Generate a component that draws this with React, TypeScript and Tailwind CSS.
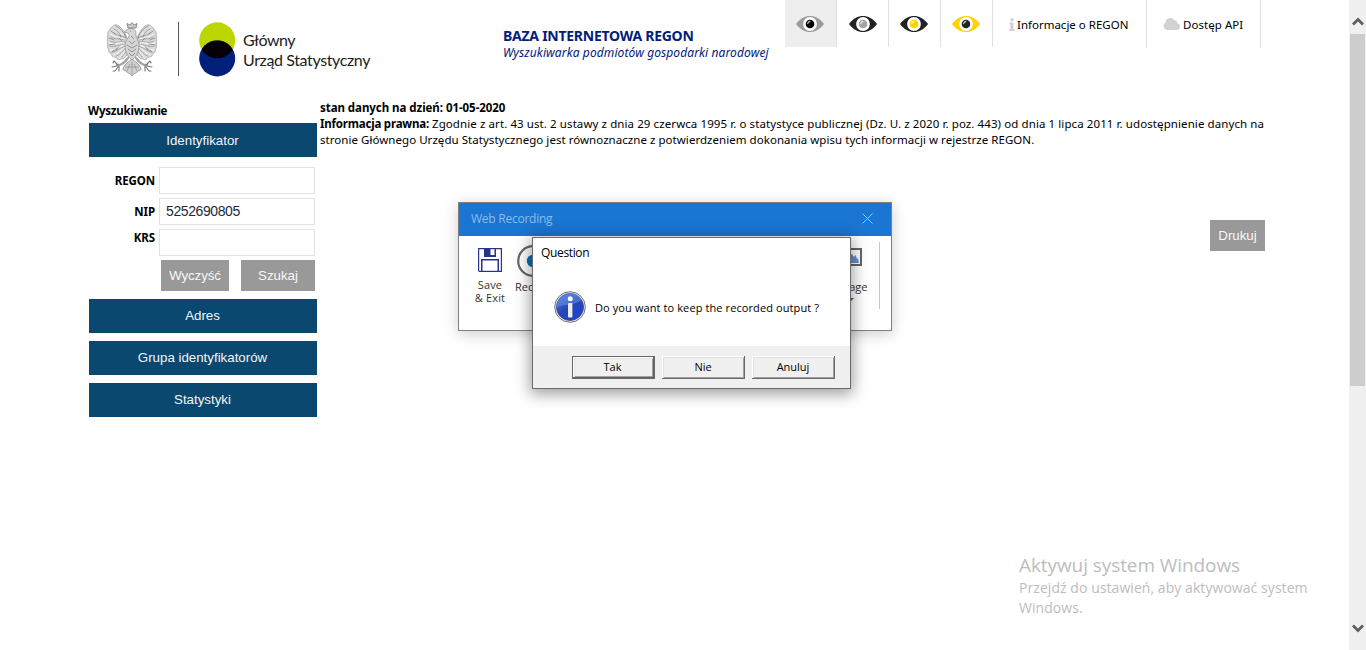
import React from "react";

const lato = "font-[Lato,'Noto_Sans',sans-serif]";
const noto = "font-['Noto_Sans','Open_Sans',sans-serif]";
const open = "font-['Open_Sans','Noto_Sans',sans-serif]";
const arial = "font-['Liberation_Sans',Arial,sans-serif]";

function WingHalf() {
  return (
    <g fill="none" stroke="#8c8c8c" strokeWidth="0.7" strokeLinecap="round">
      <path
        fill="#dadada"
        stroke="#a0a0a0"
        d="M21 19 C19 12 15 5 10 3 C7 2 6 4 5 5 C3 5 3 8 2 9 C0 10 1 13 0.5 15 C-0.5 18 1 20 0.5 23 C0 26 2 27 2 30 C3 32 5 31 5 34 C7 36 9 34 10 37 C13 39 14 36 16 37 L21 32 Z"
      />
      <path d="M19 16 C14 13 9 14 7 11 M18 18 C12 16 8 18 4 15 M18 20 C12 19 7 22 3 19 M18 22 C13 22 8 26 3 24 M19 24 C14 25 9 30 5 30 M19 26 C16 28 12 34 9 34 M20 28 C18 31 16 35 14 35" />
      <path stroke="#fafafa" strokeWidth="0.9" d="M16 12 C12 12 10 9 8 7 M17 17 C12 15 9 16 4 12 M17 21 C12 20 8 23 2 21 M17 23 C13 24 9 28 3 28 M18 25 C14 28 11 32 7 33 M19 28 C16 32 14 33 12 37" />
      <path stroke="#6a6a6a" strokeWidth="0.6" d="M9 4 C13 6 17 10 19 16 M7 7 C10 8 13 11 14 15 M4 9 L8 12 M2 16 L7 18 M2 23 L8 22 M5 30 L10 26 M12 16 L15 19 M12 25 L9 28" />
      <path stroke="#a2a2a2" strokeWidth="2.2" d="M21 36 C18 40 14 44 10 43" />
      <path stroke="#7a7a7a" strokeWidth="1.1" d="M11 43 L7 39 M10 44 L5 45 M11 45 L8 49 M12 44 L12 49 M7 39 L6 41 M8 49 L6 49" />
    </g>
  );
}

function Eagle() {
  return (
    <svg width="50" height="55" viewBox="0 0 50 55" className="shrink-0">
      <WingHalf />
      <g transform="translate(50 0) scale(-1 1)">
        <WingHalf />
      </g>
      <path fill="#d6d6d6" stroke="#8a8a8a" strokeWidth="0.7" d="M21 11 L17 10 L21 7 C24 5 29 7 29 11 C28 15 32 18 32 23 C32 30 29 35 25 38 C21 35 18 30 18 23 C18 18 23 16 22 12 Z" />
      <path fill="none" stroke="#707070" strokeWidth="0.7" d="M24 14 L27 17 M22 19 L25 22 L28 19 M20 23 L25 26 L30 23 M21 27 L25 30 L29 27 M22 31 L25 34 L28 31 M23 9 L24 9" />
      <path fill="#c9c9c9" stroke="#777" strokeWidth="0.8" d="M21 6 L20 1.5 L23 3 L25 0.5 L27 3 L30 1.5 L29 6 Z" />
      <path fill="#d0d0d0" stroke="#8c8c8c" strokeWidth="0.8" d="M25 37 C20 41 17 43 16 47 C17 50 19 48 20 50 C22 52 23 51 25 54 C27 51 28 52 30 50 C31 48 33 50 34 47 C33 43 30 41 25 37 Z" />
      <path fill="none" stroke="#858585" strokeWidth="0.6" d="M25 40 V52 M23 42 L20 49 M27 42 L30 49 M18 45 H32" />
    </svg>
  );
}

function Eye({ outer, iris }: { outer: string; iris: string }) {
  return (
    <svg width="28" height="16" viewBox="0 0 28 16">
      <path fill={outer} d="M0 8 C4 2.4 9 0 14 0 S24 2.4 28 8 C24 13.6 19 16 14 16 S4 13.6 0 8Z" />
      <circle cx="14" cy="8" r="6.9" fill="#fff" />
      <circle cx="14" cy="8" r="4.3" fill={iris} />
      <path d="M11.7 7.6 A2.6 2.6 0 0 1 13.8 5.5" stroke="#fff" strokeWidth="1.3" fill="none" strokeLinecap="round" opacity="0.7" />
    </svg>
  );
}

function Logo() {
  return (
    <div className="flex h-[60px] items-start">
      <Eagle />
      <div className="ml-[21px] h-[54px] w-px bg-[#555]" />
      <svg width="37" height="55" viewBox="0 0 37 55" className="ml-[20px]">
        <defs>
          <clipPath id="lens">
            <circle cx="18.2" cy="18.3" r="18" />
          </clipPath>
        </defs>
        <circle cx="18.2" cy="18.3" r="18" fill="#bdd600" />
        <circle cx="18.2" cy="36.4" r="18" fill="#00207c" />
        <circle cx="18.2" cy="36.4" r="18" fill="#050006" clipPath="url(#lens)" />
      </svg>
      <div className={`${lato} ml-[7px] mt-[8px] whitespace-nowrap text-[16px] leading-[20px] text-[#1c1c1c]`}>
        <div className="tracking-[-0.5px]">Główny</div>
        <div className="tracking-[-0.38px]">Urząd Statystyczny</div>
      </div>
    </div>
  );
}

function Header() {
  const eyes = [
    { outer: "#9c9c9c", iris: "#000", pad: "pl-[11px]" },
    { outer: "#222", iris: "#a5a5a5", pad: "pl-[12px]" },
    { outer: "#222", iris: "#ffd200", pad: "pl-[11px]" },
    { outer: "#ffd200", iris: "#222", pad: "pl-[11px]" },
  ];
  return (
    <header className="flex h-[98px] items-start pl-[107px]">
      <div className="w-[396px] pt-[22px]">
        <Logo />
      </div>
      <div className={`${noto} w-[282px] whitespace-nowrap pt-[27px] text-[#00207c]`}>
        <div className="text-[14px] font-bold leading-[18px] tracking-[-0.26px]">BAZA INTERNETOWA REGON</div>
        <div className="text-[12px] italic leading-[16px] tracking-[0.1px]">Wyszukiwarka podmiotów gospodarki narodowej</div>
      </div>
      <div className="flex">
        {eyes.map((e, i) => (
          <div key={i} className={`flex h-[47px] w-[52px] items-center border-r border-[#e0e0e0] ${e.pad} ${i === 0 ? "bg-[#eee]" : ""}`}>
            <Eye outer={e.outer} iris={e.iris} />
          </div>
        ))}
        <div className="flex h-[48px] w-[154px] items-center border-r border-[#e0e0e0] pl-4">
          <svg width="6" height="13" viewBox="0 0 6 13" fill="#d2d2d2">
            <circle cx="3" cy="1.8" r="1.8" />
            <path d="M0.5 4.5H4.5V11H5.6V13H0.3V11H1.4V6.4H0.5Z" />
          </svg>
          <span className={`${noto} ml-[2px] mt-[2px] whitespace-nowrap text-[11.5px] leading-[16px]`}>Informacje o REGON</span>
        </div>
        <div className="flex h-[48px] w-[114px] items-center border-r border-[#e0e0e0] pl-4">
          <svg width="18" height="12" viewBox="0 0 18 12" fill="#d2d2d2">
            <path d="M4 12A4 4 0 0 1 2.5 4.6A4.8 4.8 0 0 1 11.3 2.2A2.8 2.8 0 0 1 14.3 5.3A3.4 3.4 0 0 1 14 12Z" />
          </svg>
          <span className={`${noto} ml-[2px] mt-[2px] whitespace-nowrap text-[11.5px] leading-[16px] tracking-[0.05px]`}>Dostęp API</span>
        </div>
      </div>
    </header>
  );
}

const menuButton = `${arial} flex h-[34px] w-[228px] items-center justify-center bg-[#0b486f] pr-px text-[13.3px] text-[#f5f5f5]`;
const greyButton = `${arial} flex h-[31px] items-center justify-center bg-[#999] pt-px text-[13.3px] text-[#f8f8f8]`;

function Field({ label, value, lift }: { label: string; value?: string; lift?: boolean }) {
  return (
    <div className="flex h-[27px]">
      <div className={`${noto} flex w-[66px] justify-end text-[11.5px] font-bold leading-[16px] tracking-[-0.1px] ${lift ? "pt-[1px]" : "pt-[6px]"}`}>{label}</div>
      <div className={`${arial} ml-1 h-[27px] w-[156px] border border-[#e2e2e2] pl-[6px] text-[14px] leading-[25px] tracking-[-0.4px] text-[#1b2a3a]`}>{value}</div>
    </div>
  );
}

function Sidebar() {
  return (
    <aside className="w-[228px]">
      <div className={`${noto} -ml-px h-[25px] pt-[5px] text-[11.5px] font-bold leading-[16px] tracking-[-0.2px]`}>Wyszukiwanie</div>
      <div className={`${menuButton} pt-px`}>Identyfikator</div>
      <div className="mt-[10px] flex flex-col gap-1">
        <Field label="REGON" />
        <Field label="NIP" value="5252690805" />
        <Field label="KRS" lift />
      </div>
      <div className="mt-1 flex gap-3 pl-[72px]">
        <div className={`${greyButton} w-[68px] tracking-[-0.1px]`}>Wyczyść</div>
        <div className={`${greyButton} w-[74px]`}>Szukaj</div>
      </div>
      <div className="mt-2 flex flex-col gap-2">
        <div className={menuButton}>Adres</div>
        <div className={menuButton}>Grupa identyfikatorów</div>
        <div className={menuButton}>Statystyki</div>
      </div>
    </aside>
  );
}

function Content() {
  return (
    <main className="flex w-[945px] flex-col">
      <div className={`${noto} whitespace-nowrap pt-[2px] text-[11.5px] leading-[16px]`}>
        <div className="font-bold tracking-[-0.05px]">stan danych na dzień: 01-05-2020</div>
        <div>
          <b className="tracking-[-0.2px]">Informacja prawna:</b>{" "}
          <span className="tracking-[0.09px]">Zgodnie z art. 43 ust. 2 ustawy z dnia 29 czerwca 1995 r. o statystyce publicznej (Dz. U. z 2020 r. poz. 443) od dnia 1 lipca 2011 r. udostępnienie danych na</span>
        </div>
        <div className="tracking-[0.045px]">stronie Głównego Urzędu Statystycznego jest równoznaczne z potwierdzeniem dokonania wpisu tych informacji w rejestrze REGON.</div>
      </div>
      <div className={`${greyButton} mt-[72px] w-[55px] self-end`}>Drukuj</div>
    </main>
  );
}

function RecordingWindow() {
  return (
    <div className="absolute left-[458px] top-[202px] flex h-[129px] w-[434px] flex-col border border-[#808080] bg-white shadow-[0_3px_14px_rgba(0,0,0,0.2)]">
      <div className="flex h-[33px] items-center justify-between bg-[#1a75d3] pb-[2px] pl-3 pr-[18px]">
        <span className={`${open} text-[12px] tracking-[-0.25px] text-[#8bbcea]`}>Web Recording</span>
        <svg width="11" height="11" viewBox="0 0 11 11" stroke="#9bc5ef" strokeWidth="1">
          <path d="M0.5 0.5L10.5 10.5M10.5 0.5L0.5 10.5" />
        </svg>
      </div>
      <div className={`${open} flex flex-1 text-[11px] leading-[13px] text-[#333]`}>
        <div className="flex w-[62px] flex-col items-center pt-3">
          <svg width="24" height="24" viewBox="0 0 24 24">
            <path d="M0 0H24V24H1L0 23Z" fill="#27348b" />
            <path d="M1.2 1.2H6V9H18V1.2H22.8V22.8H21V11H3V22.8H1.2Z" fill="#fff" />
            <path d="M12.5 1.2H16.5V7H12.5Z" fill="#fff" />
            <path d="M4.5 12.5H19.5V22.8H4.5Z" fill="#fff" />
          </svg>
          <div className="mt-[6px] text-center tracking-[0.15px]">Save<br />&amp; Exit</div>
        </div>
        <div className="w-[40px] pt-[9px]">
          <svg width="32" height="32" viewBox="0 0 32 32" className="-ml-1">
            <circle cx="16" cy="16" r="14.8" fill="#fff" stroke="#666" strokeWidth="2.2" />
            <circle cx="16" cy="16" r="6.2" fill="#0b72b9" />
          </svg>
          <div className="-ml-[6px] mt-[3px]">Record</div>
        </div>
        <div className="ml-auto w-[44px] pt-[12px]">
          <svg width="26" height="18" viewBox="0 0 26 18" className="ml-[1px]">
            <rect x="1" y="1" width="24" height="16" fill="#fff" stroke="#666" strokeWidth="2" />
            <path d="M3 15V10L6 7L9 11L13 9L14.5 7L16 6L18 9L19.5 7L21 11L22 10L23 15Z" fill="#6590cf" />
          </svg>
          <div className="ml-px mt-[14px]">Image</div>
          <svg width="7" height="4" viewBox="0 0 7 4" className="ml-[12px] mt-[5px]" fill="#555">
            <path d="M0 0H7L3.5 3.5Z" />
          </svg>
        </div>
        <div className="mr-[11px] mt-[6px] h-[67px] w-px bg-[#c6c6c6]" />
      </div>
    </div>
  );
}

function DialogButton({ children, focused }: { children: string; focused?: boolean }) {
  const raised = "h-[23px] w-[83px] border-b border-r border-[#696969] shadow-[inset_1px_1px_0_#fff,inset_2px_2px_0_#e3e3e3,inset_-1px_-1px_0_#a0a0a0]";
  const active = "h-[23px] w-[83px] border border-b-2 border-r-2 border-[#646464] pr-px shadow-[inset_1px_1px_0_#fff,inset_2px_2px_0_#e3e3e3,inset_-1px_-1px_0_#a0a0a0]";
  return <div className={`flex items-center justify-center bg-[#f0f0f0] ${focused ? active : raised}`}>{children}</div>;
}

function QuestionDialog() {
  return (
    <div className={`${open} absolute left-[532px] top-[237px] flex h-[152px] w-[319px] flex-col border border-[#6b6b6b] bg-white text-[11px] text-black shadow-[0_3px_14px_2px_rgba(0,0,0,0.38)]`}>
      <div className="h-[52px] pl-2 pt-[7px] text-[12px] leading-[16px] tracking-[-0.35px]">Question</div>
      <div className="flex h-[56px] pl-[21px] pt-px">
        <svg width="32" height="32" viewBox="0 0 32 32">
          <defs>
            <linearGradient id="ball" x1="0" y1="0" x2="0.8" y2="1">
              <stop offset="0" stopColor="#6488e2" />
              <stop offset="0.5" stopColor="#2148b4" />
              <stop offset="1" stopColor="#243fce" />
            </linearGradient>
          </defs>
          <circle cx="16" cy="16" r="15.3" fill="#f4f4f4" stroke="#707070" strokeWidth="1" />
          <circle cx="16" cy="16" r="13.6" fill="url(#ball)" stroke="#3b4e8e" strokeWidth="0.8" />
          <path d="M3 17C7 12 18 16 28 9A13.3 13.3 0 0 0 3 17Z" fill="#6c8ce8" opacity="0.55" />
          <circle cx="16.2" cy="7.8" r="2.5" fill="#fff" />
          <rect x="14" y="12" width="4.4" height="14.5" rx="0.8" fill="#ececec" />
        </svg>
        <span className="ml-[9px] mt-[9px] whitespace-nowrap leading-[16px] tracking-[0.1px]">Do you want to keep the recorded output ?</span>
      </div>
      <div className="flex flex-1 gap-[7px] bg-[#f0f0f0] pl-[39px] pt-[10px]">
        <DialogButton focused>Tak</DialogButton>
        <DialogButton>Nie</DialogButton>
        <DialogButton>Anuluj</DialogButton>
      </div>
    </div>
  );
}

function Scrollbar() {
  return (
    <div className="flex h-full w-[17px] flex-col items-center bg-[#f0f0f0]">
      <div className="flex h-[34px] items-center pt-[9px]">
        <svg width="12" height="9" viewBox="0 0 12 9" fill="none" stroke="#606060" strokeWidth="2.8">
          <path d="M1 7.5L6 2.5L11 7.5" />
        </svg>
      </div>
      <div className="h-[352px] w-[15px] bg-[#cdcdcd]" />
      <svg width="12" height="9" viewBox="0 0 12 9" fill="none" stroke="#606060" strokeWidth="2.8" className="mb-[17px] mt-auto">
        <path d="M1 1.5L6 6.5L11 1.5" />
      </svg>
    </div>
  );
}

export default function App() {
  return (
    <div className="relative flex h-[650px] w-[1366px] overflow-hidden bg-white text-black">
      <div className="w-[1349px]">
        <Header />
        <div className="flex pl-[89px]">
          <Sidebar />
          <div className="w-[3px]" />
          <Content />
        </div>
      </div>
      <Scrollbar />
      <RecordingWindow />
      <QuestionDialog />
      <div className={`${open} absolute left-[1019px] top-[553px] whitespace-nowrap text-[#bdbdbd]`}>
        <div className="text-[19px] leading-[25px] tracking-[-0.08px]">Aktywuj system Windows</div>
        <div className="text-[14px] leading-[20px] tracking-[0.06px]">Przejdź do ustawień, aby aktywować system<br />Windows.</div>
      </div>
    </div>
  );
}
